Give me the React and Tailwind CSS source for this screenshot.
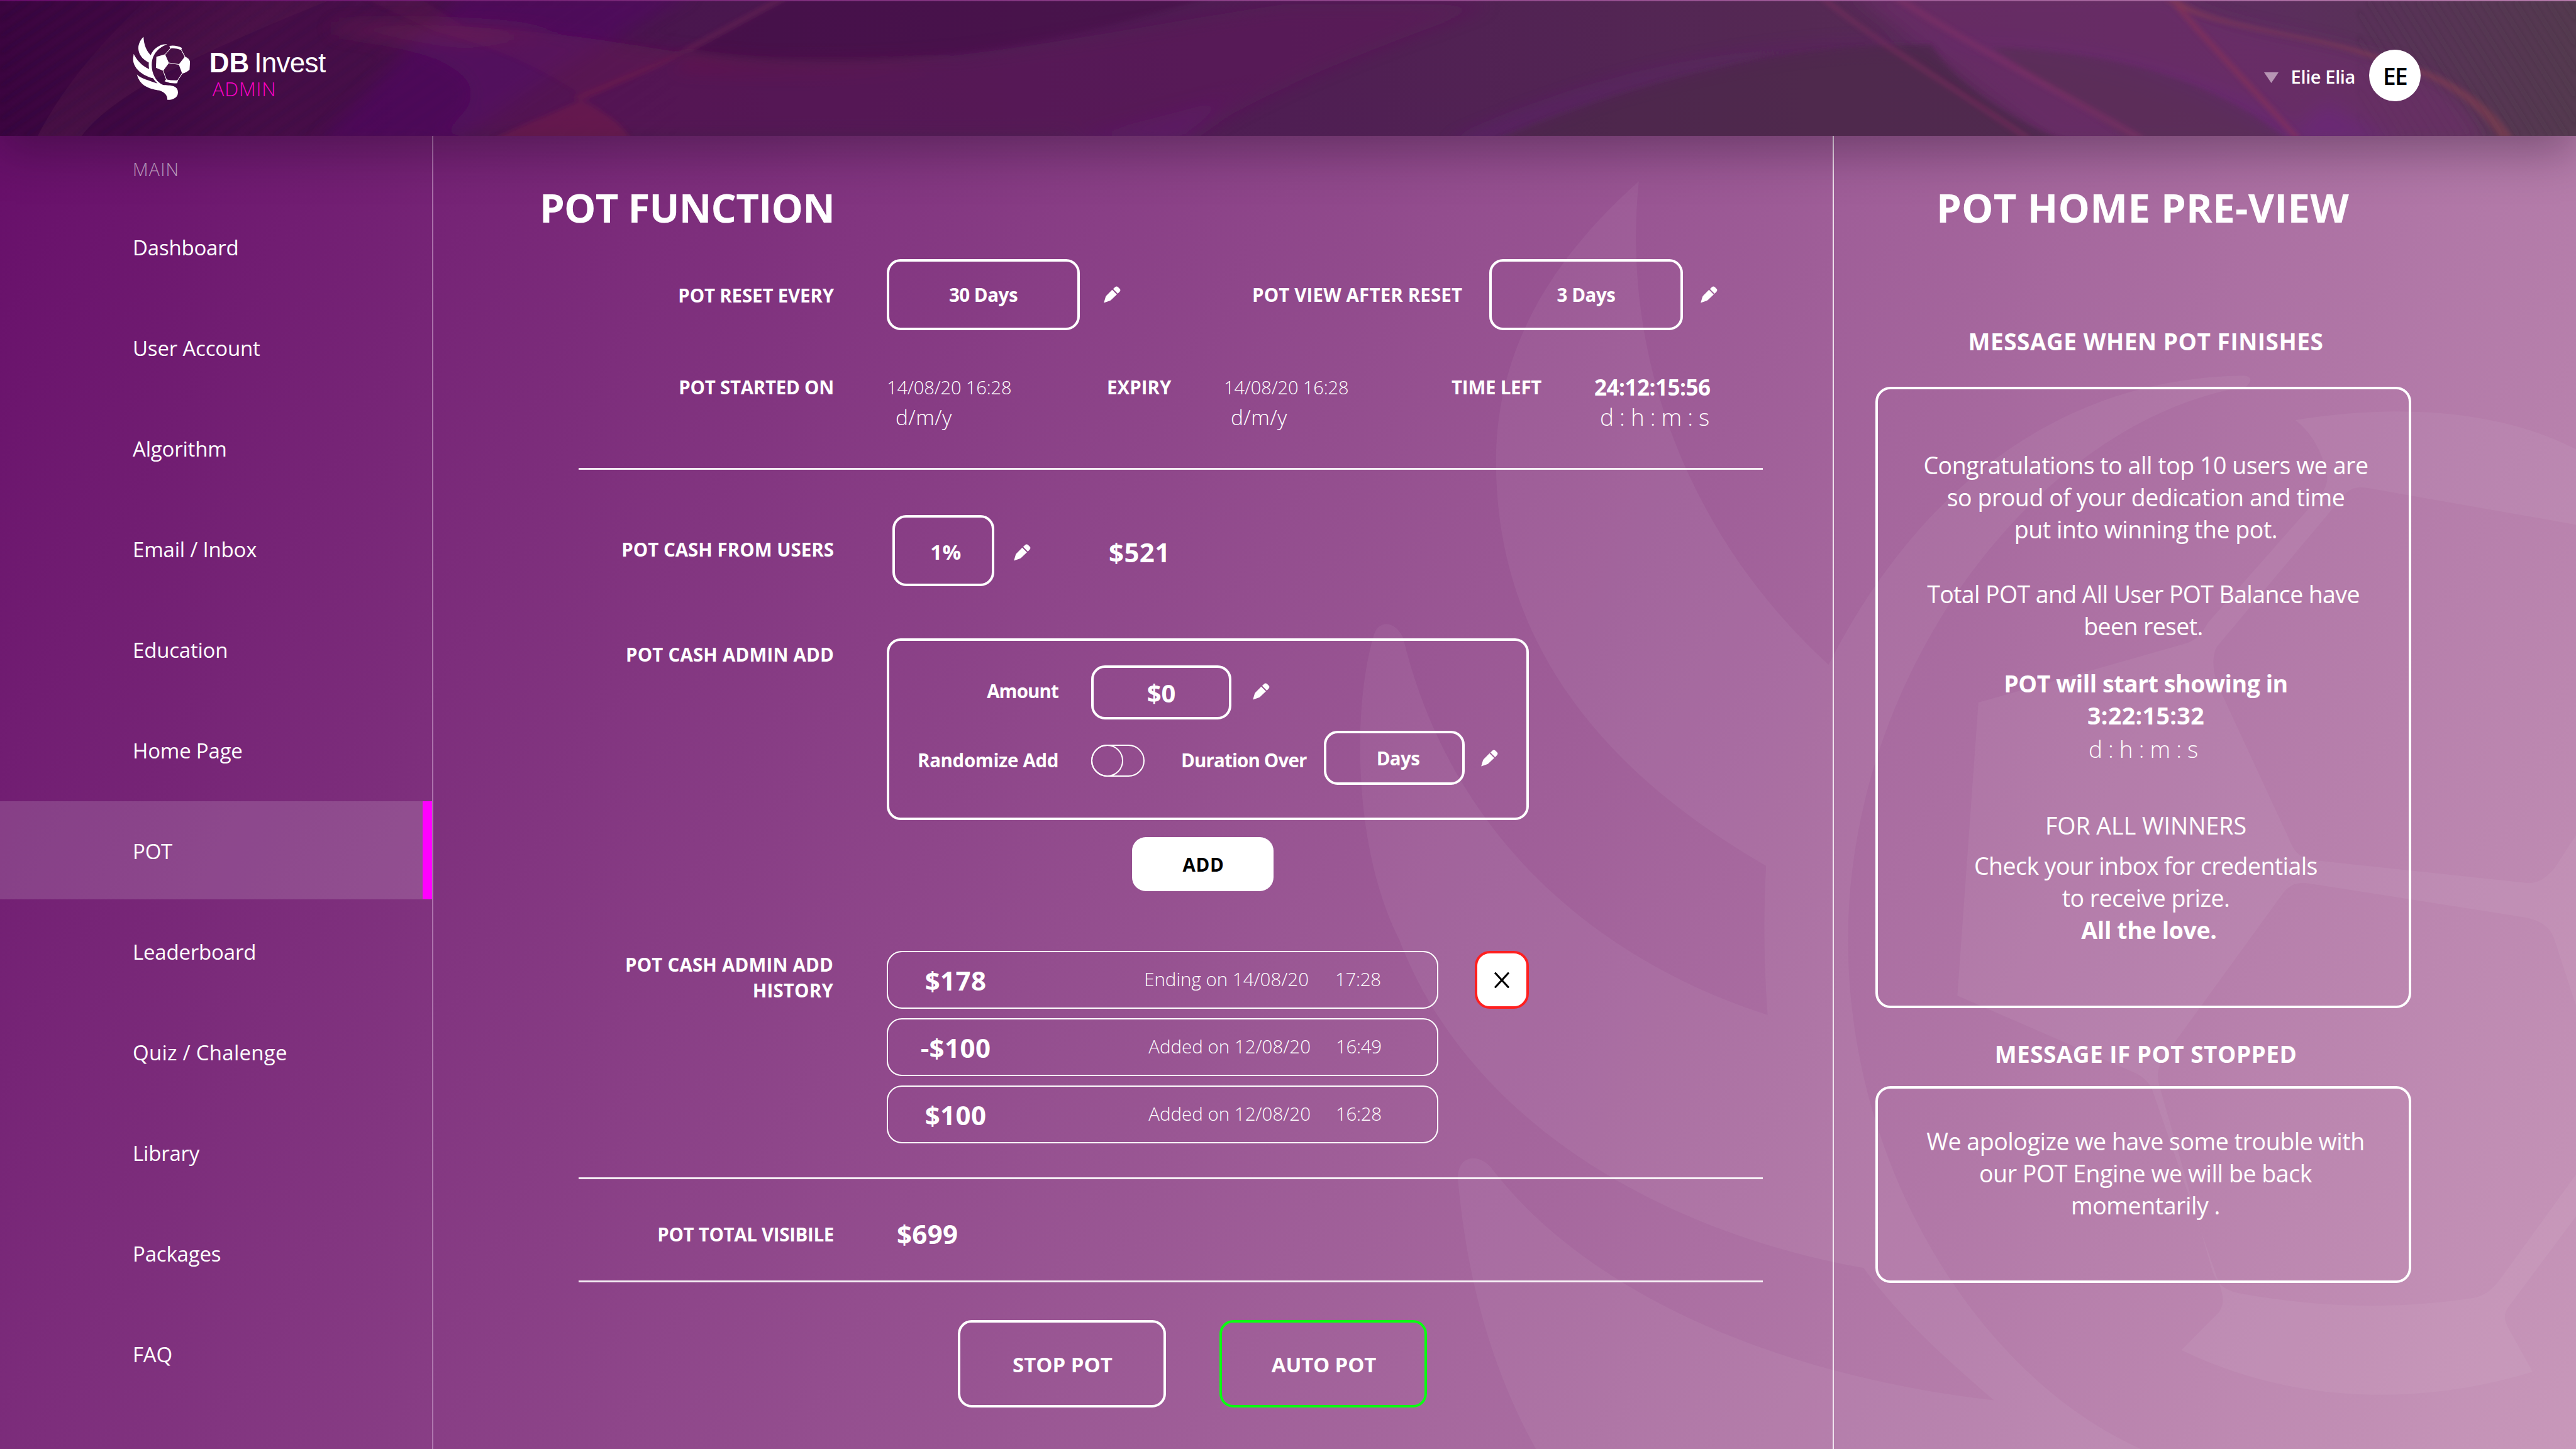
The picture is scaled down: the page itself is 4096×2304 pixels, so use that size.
import React from "react";

const NAV = [
  "Dashboard",
  "User Account",
  "Algorithm",
  "Email / Inbox",
  "Education",
  "Home Page",
  "POT",
  "Leaderboard",
  "Quiz / Chalenge",
  "Library",
  "Packages",
  "FAQ",
];

const HISTORY = [
  { amount: "$178", label: "Ending on 14/08/20", time: "17:28" },
  { amount: "-$100", label: "Added on 12/08/20", time: "16:49" },
  { amount: "$100", label: "Added on 12/08/20", time: "16:28" },
];

function Pencil({ className = "" }) {
  return (
    <svg viewBox="0 0 27 27" className={"h-[27px] w-[27px] shrink-0 fill-white " + className}>
      <path d="M0.2 26.6 L3 17 C3.3 16.1 3.7 15.5 4.3 14.9 L13.4 5.8 L20.9 13.2 L12.2 21.6 C11.2 22.6 10.2 23.2 8.9 23.6 Z" />
      <path d="M14.9 4.5 L18 1.4 C19.4 0.1 21.3 0.1 22.7 1.4 L25.5 4.3 C26.8 5.7 26.7 7.4 25.4 8.7 L22.3 11.9 Z" />
    </svg>
  );
}

function LogoMark() {
  return (
    <svg viewBox="95 70 370 410" className="h-[105px] w-[94.7px] shrink-0">
      <path
        fill="#fff"
        d="M170 80 C172 132 190 170 215 194 C230 155 270 123 318 126 C255 150 221 195 221 255 C221 320 260 372 299 380 C345 382 384 385 384 425 C384 460 350 472 318 471 C320 448 305 425 268 413 C220 405 148 392 129 313 C150 337 200 350 257 370 C243 357 236 347 229 337 C170 322 105 280 105 215 L109 186 C125 220 160 262 205 280 C202 265 202 252 203 240 C160 218 138 185 138 150 C138 120 155 95 170 80 Z"
      />
      <g fill="#fff">
        <path d="M250 204 L304 188 L328 243 L292 291 L247 272 Z" />
        <path d="M427 203 C445 210 455 220 459 234 L456 284 C445 296 430 304 410 308 L389 252 Z" />
        <path d="M331 136 Q372 130 409 149 L404 162 Q370 147 335 152 Z" />
        <path d="M310 344 Q345 352 384 350 L380 368 Q338 372 301 356 Z" />
      </g>
      <path
        fill="none"
        stroke="#fff"
        strokeWidth="4"
        d="M304 190 L338 151 M404 160 L428 205 M327 242 L391 252 M291 288 L313 348 M411 305 L381 352"
      />
    </svg>
  );
}

function Watermark() {
  return (
    <svg viewBox="0 0 4096 2304" className="absolute inset-0 h-full w-full">
      <g transform="translate(2150.4 215) scale(1.2411 1.3322)" fill="#fff" fillOpacity="0.05">
        <path d="M367 55 C240 160 184 270 184 390 C184 620 340 770 530 872 C526 940 528 1000 532 1050 C330 990 130 850 65 600 C55 580 35 578 28 595 C0 680 0 850 60 960 C150 1180 400 1310 655 1352 C700 1410 760 1460 822 1510 C540 1480 300 1380 180 1235 C165 1215 135 1215 135 1245 C150 1400 195 1500 235 1568 L1010 1568 C800 1480 635 1230 635 960 C635 640 880 340 1145 300 C1155 292 1150 287 1140 287 C900 290 720 430 610 632 C420 470 345 250 367 55 Z" />
        <path d="M1208 340 C1340 320 1470 328 1568 375 L1568 465 L1300 421 C1285 419 1278 422 1270 430 L1108 610 C1100 622 1103 640 1108 655 L1200 840 C1205 852 1212 862 1228 865 L1500 892 C1520 895 1530 885 1540 875 L1568 835 L1568 1040 L1540 960 C1535 945 1522 938 1505 934 L1225 893 C1210 891 1200 895 1192 905 L1040 1100 C1032 1112 1030 1122 1034 1135 L1100 1350 C1105 1368 1115 1378 1135 1382 C1250 1402 1350 1400 1435 1388 C1450 1386 1460 1378 1470 1366 L1568 1240 L1568 1290 L1480 1400 C1475 1408 1476 1414 1480 1422 L1512 1476 C1350 1522 1190 1508 1062 1450 L1110 1405 C1117 1395 1116 1388 1112 1375 L1025 1140 C1020 1128 1010 1122 1000 1118 L775 1027 L802 677 L1070 606 C1085 600 1090 592 1096 582 L1240 430 C1252 415 1250 405 1245 392 C1238 370 1225 352 1208 340 Z" />
      </g>
    </svg>
  );
}

function HeaderArt() {
  return (
    <svg viewBox="0 0 4096 216" preserveAspectRatio="none" className="absolute inset-0 h-full w-full">
      <defs>
        <linearGradient id="hb" x1="0" x2="1" y1="0" y2="0">
          <stop offset="0" stopColor="#3c0541" />
          <stop offset="0.1" stopColor="#470d48" />
          <stop offset="0.3" stopColor="#4a184f" />
          <stop offset="0.5" stopColor="#4f1e53" />
          <stop offset="0.7" stopColor="#552954" />
          <stop offset="0.88" stopColor="#5b2d5d" />
          <stop offset="1" stopColor="#553a50" />
        </linearGradient>
        <linearGradient id="lf" x1="0" x2="0.6" y1="0" y2="1">
          <stop offset="0" stopColor="#7a3050" stopOpacity="0" />
          <stop offset="1" stopColor="#603050" stopOpacity="0.3" />
        </linearGradient>
        <pattern id="hatch" width="22" height="22" patternUnits="userSpaceOnUse" patternTransform="rotate(56)">
          <rect width="7" height="22" fill="#1c0322" fillOpacity="0.16" />
        </pattern>
        <pattern id="hatchR" width="22" height="22" patternUnits="userSpaceOnUse" patternTransform="rotate(-32)">
          <rect width="7" height="22" fill="#3a2a3c" fillOpacity="0.14" />
        </pattern>
        <linearGradient id="fadeL" x1="0" x2="1" y1="0" y2="0">
          <stop offset="0" stopColor="#fff" />
          <stop offset="1" stopColor="#000" />
        </linearGradient>
        <mask id="mL">
          <rect width="1100" height="216" fill="url(#fadeL)" />
        </mask>
        <filter id="b3" x="-5%" y="-20%" width="110%" height="140%">
          <feGaussianBlur stdDeviation="4" />
        </filter>
        <filter id="b8" x="-5%" y="-20%" width="110%" height="140%">
          <feGaussianBlur stdDeviation="14" />
        </filter>
      </defs>
      <rect width="4096" height="216" fill="url(#hb)" />
      <rect width="1100" height="216" fill="url(#hatch)" mask="url(#mL)" filter="url(#b3)" />
      <rect x="3750" width="346" height="216" fill="url(#hatchR)" filter="url(#b3)" />
      <path d="M60 216 C110 120 170 60 230 0 L520 0 C300 90 180 150 130 216 Z" fill="url(#lf)" />
      <g filter="url(#b8)" opacity="0.85">
        <g transform="translate(384 0) scale(2.3676 0.256)">
          <path d="M60 180 C130 100 220 200 300 330 C350 410 420 390 480 340 C560 250 620 130 700 20 L840 20 C760 300 700 500 640 843 L130 843 C190 500 130 300 60 180 Z" fill="#641a5c" fillOpacity="0.5" />
          <path d="M150 -60 L305 -60 L215 420 L140 900 L50 900 Z" fill="#560e70" fillOpacity="0.45" />
          <path d="M60 150 C100 130 170 150 210 200 L150 260 C120 230 90 200 60 190 Z" fill="#7c2a50" fillOpacity="0.45" />
          <path d="M300 330 C350 410 420 390 480 360 C420 470 330 440 290 420 Z" fill="#6f1a4c" fillOpacity="0.6" />
          <path d="M700 520 L660 640 L630 900 L545 900 Z" fill="#611c6c" fillOpacity="0.7" />
          <path d="M1080 -60 L1298 -60 C1310 150 1395 220 1425 330 C1475 430 1495 620 1510 900 L1215 900 Z" fill="#742c70" fillOpacity="0.6" />
          <path d="M820 900 C900 560 1000 270 1120 265 C1250 260 1340 600 1385 900" fill="none" stroke="#6a1f84" strokeWidth="22" strokeOpacity="0.5" />
          <path d="M1385 760 L1400 640 L1450 900 L1385 900 Z" fill="#70208a" fillOpacity="0.5" />
        </g>
      </g>
      <g filter="url(#b3)" opacity="0.7">
        <g transform="translate(384 0) scale(2.3676 0.256)">
          <path d="M80 -30 L118 -30 L150 160 C220 190 260 280 300 320 L165 880 L262 880 C240 600 190 330 130 190 Z" fill="#7c2050" fillOpacity="0.2" />
          <path d="M298 310 C280 440 230 600 165 880 L262 880 C255 720 230 640 222 600 Z" fill="#7d1f48" fillOpacity="0.5" />
          <path d="M365 -30 L298 310" stroke="#7a2555" strokeWidth="6" strokeOpacity="0.6" />
          <path d="M370 -30 L650 -30 C560 250 470 370 400 375 C350 375 320 340 302 310 Z" fill="#3c1040" fillOpacity="0.4" />
          <path d="M840 880 C910 600 1010 290 1115 272 C1150 500 1180 700 1200 880 Z" fill="#4a2846" fillOpacity="0.7" />
          <path d="M1135 272 C1150 500 1180 700 1225 880 L1200 880 L1115 275 Z" fill="#462445" fillOpacity="0.8" />
          <path d="M1175 290 C1280 320 1340 600 1375 880 L1270 880 Z" fill="#523050" fillOpacity="0.7" />
          <path d="M1062 -20 C1100 270 1150 540 1200 860" fill="none" stroke="#85305f" strokeWidth="5" strokeOpacity="0.65" />
          <path d="M1112 -20 C1160 270 1220 560 1275 860" fill="none" stroke="#8a3068" strokeWidth="8" strokeOpacity="0.6" />
          <path d="M1296 -20 C1312 150 1395 215 1430 340 C1475 440 1505 620 1521 860" fill="none" stroke="#944450" strokeWidth="9" strokeOpacity="0.65" />
          <path d="M1300 30 C1325 300 1350 560 1381 860" fill="none" stroke="#a0384f" strokeWidth="4" strokeOpacity="0.65" />
        </g>
      </g>
    </svg>
  );
}

function Header() {
  return (
    <header className="relative mt-[2px] flex h-[214px] shrink-0 items-start overflow-hidden">
      <HeaderArt />
      <div className="relative flex pt-[54px] pl-[209px]">
        <LogoMark />
        <div className="flex flex-col pl-[29px]">
          <div className="mt-[19px] flex h-[50px] items-center font-['Liberation_Sans',sans-serif] text-[44px] leading-[50px]">
            <span className="font-bold">DB</span>
            <span className="ml-[8px] tracking-[-0.016em]">Invest</span>
          </div>
          <div className="ml-[5px] text-[31px] leading-[32px] font-light tracking-[0.028em] text-[#ff00c8]">ADMIN</div>
        </div>
      </div>
      <div className="relative mr-[247px] ml-auto flex items-center pt-[77px]">
        <svg viewBox="0 0 23 17" className="mt-[7px] h-[17px] w-[23px] fill-[#b795b4]">
          <path d="M0 0 H23 L11.5 17 Z" />
        </svg>
        <span className="mr-[22px] ml-[20px] pt-[3px] text-[29px] leading-[40px] font-semibold tracking-[-0.013em]">Elie Elia</span>
        <div className="flex h-[82px] w-[82px] items-center justify-center rounded-full bg-white pt-[2px] text-[37px] font-semibold tracking-[-0.045em] text-black">
          EE
        </div>
      </div>
    </header>
  );
}

function Sidebar() {
  return (
    <nav className="flex w-[689px] shrink-0 flex-col border-r-2 border-[#c08fc0]/70">
      <div className="mt-[33px] pl-[211px] text-[28.5px] leading-[40px] font-light tracking-[0.043em] text-white/60">MAIN</div>
      <ul className="mt-[25px] flex flex-col gap-[4px] text-[33px] tracking-[-0.006em]">
        {NAV.map((item) => (
          <li
            key={item}
            className={
              item === "POT"
                ? "flex h-[156px] items-center border-r-[15px] border-[#ff00ff] bg-white/15 pt-[4px] pl-[211px]"
                : item === "Quiz / Chalenge"
                  ? "flex h-[156px] items-center pt-[4px] pl-[211px] tracking-[0.008em]"
                  : "flex h-[156px] items-center pt-[4px] pl-[211px]"
            }
          >
            {item}
          </li>
        ))}
      </ul>
    </nav>
  );
}

function Label({ children, className = "" }) {
  return (
    <div className={"w-[637px] shrink-0 text-right text-[29.5px] leading-[41px] font-bold whitespace-nowrap " + className}>
      {children}
    </div>
  );
}

function Divider({ className }) {
  return <div className={"ml-[231px] h-[3px] w-[1883px] shrink-0 bg-white/90 " + className} />;
}

const fieldBase = "flex shrink-0 items-center justify-center rounded-[22px] border-4 border-white font-bold ";

function PotFunction() {
  return (
    <main className="flex w-[2225px] shrink-0 flex-col whitespace-nowrap">
      <h1 className="mt-[71px] h-[86px] pl-[169px] text-[63.5px] leading-[86px] font-bold tracking-[-0.0125em]">POT FUNCTION</h1>

      <div className="mt-[39px] flex h-[113px] items-center">
        <Label className="pt-[2px] tracking-[-0.006em]">POT RESET EVERY</Label>
        <div className={fieldBase + "ml-[84px] h-[113px] w-[307px] pt-[2px] text-[29.5px] tracking-[-0.016em]"}>30 Days</div>
        <Pencil className="ml-[38px]" />
        <div className="ml-[209px] w-[336px] pt-[2px] text-[29.5px] font-bold tracking-[0.0046em]">POT VIEW AFTER RESET</div>
        <div className={fieldBase + "ml-[41px] h-[113px] w-[308px] pt-[2px] text-[29.5px] tracking-[-0.016em]"}>3 Days</div>
        <Pencil className="ml-[28px]" />
      </div>

      <div className="mt-[67px] flex h-[94px] items-start text-[29px] leading-[48px]">
        <Label className="leading-[48px] tracking-[-0.009em]">POT STARTED ON</Label>
        <div className="ml-[84px] w-[350px]">
          <div className="font-light tracking-[-0.0032em]">14/08/20 16:28</div>
          <div className="ml-[14px] text-[33.5px] leading-[46px] font-light tracking-[0.012em]">d/m/y</div>
        </div>
        <div className="w-[186px] text-[29.5px] font-bold">EXPIRY</div>
        <div className="w-[362px]">
          <div className="font-light tracking-[-0.0032em]">14/08/20 16:28</div>
          <div className="ml-[11px] text-[33.5px] leading-[46px] font-light tracking-[0.012em]">d/m/y</div>
        </div>
        <div className="w-[227px] text-[29.5px] font-bold tracking-[-0.008em]">TIME LEFT</div>
        <div>
          <div className="text-[35px] font-bold tracking-[-0.0144em]">24:12:15:56</div>
          <div className="ml-[9px] text-[37px] leading-[46px] font-light tracking-[-0.008em]">d : h : m : s</div>
        </div>
      </div>

      <Divider className="mt-[58px]" />

      <div className="mt-[72px] flex h-[113px] items-center">
        <Label className="pb-[5px]">POT CASH FROM USERS</Label>
        <div className={fieldBase + "ml-[93px] h-[113px] w-[162px] pt-[4px] pl-[8px] text-[33px] tracking-[0.01em]"}>1%</div>
        <Pencil className="mt-[6px] ml-[31px]" />
        <div className="ml-[124px] pt-[4px] text-[42px] font-bold tracking-[0.01em]">$521</div>
      </div>

      <div className="mt-[83px] flex h-[289px] items-start">
        <Label className="pt-[5px] tracking-[0.006em]">POT CASH ADMIN ADD</Label>
        <div className="ml-[84px] flex h-[289px] w-[1021px] flex-col rounded-[22px] border-4 border-white pt-[39px] text-[29.5px] font-bold">
          <div className="flex h-[86px] items-center">
            <div className="w-[269px] pb-[4px] text-right tracking-[-0.03em]">Amount</div>
            <div className={fieldBase + "ml-[52px] h-[86px] w-[223px] pt-px text-[40px]"}>$0</div>
            <Pencil className="mb-[3px] ml-[34px]" />
          </div>
          <div className="mt-[18px] flex h-[86px] items-center">
            <div className="w-[269px] pt-[9px] text-right tracking-[-0.0125em]">Randomize Add</div>
            <div className="mt-[8px] ml-[52px] flex h-[51px] w-[85px] rounded-full border-2 border-white">
              <div className="-mt-[2px] -ml-[2px] h-[51px] w-[51px] rounded-full border-2 border-white" />
            </div>
            <div className="ml-[58px] w-[200px] pt-[9px] tracking-[-0.029em]">Duration Over</div>
            <div className={fieldBase + "ml-[27px] h-[86px] w-[224px] pt-[2px] pl-[12px] tracking-[-0.02em]"}>Days</div>
            <Pencil className="ml-[26px]" />
          </div>
        </div>
      </div>

      <button className="mt-[27px] ml-[1111px] h-[86px] w-[225px] rounded-[22px] bg-white pt-[3px] pl-[2px] text-[29.5px] font-bold tracking-[0.024em] text-black">
        ADD
      </button>

      <div className="mt-[95px] flex h-[306px] items-start">
        <Label className="pt-[1px] pr-px tracking-[0.006em]">
          POT CASH ADMIN ADD
          <br />
          HISTORY
        </Label>
        <div className="ml-[84px] flex w-[877px] flex-col gap-[15px]">
          {HISTORY.map((h) => (
            <div key={h.amount} className="flex h-[92px] items-center rounded-[24px] border-2 border-white text-[29.5px]">
              <div className="w-[215px] text-center text-[42px] font-bold tracking-[0.01em]">{h.amount}</div>
              <div className={h.label.startsWith("Added") ? "mr-[40px] ml-auto pb-px font-light" : "mr-[42px] ml-auto pb-px font-light"}>{h.label}</div>
              <div className={h.label.startsWith("Added") ? "w-[161px] pb-px font-light tracking-[-0.012em]" : "w-[162px] pb-px font-light tracking-[-0.012em]"}>{h.time}</div>
            </div>
          ))}
        </div>
        <button className="ml-[58px] flex h-[92px] w-[86px] items-center justify-center rounded-[24px] border-4 border-[#ff1f1f] bg-white">
          <svg viewBox="0 0 24 24" className="h-[25px] w-[24px]">
            <path d="M1 0 L23 24 M23 0 L1 24" stroke="#000" strokeWidth="3" fill="none" />
          </svg>
        </button>
      </div>

      <Divider className="mt-[54px]" />
      <div className="flex h-[161px] items-center pt-[11px]">
        <Label className="pt-[2px] tracking-[-0.0115em]">POT TOTAL VISIBILE</Label>
        <div className="ml-[100px] text-[42px] font-bold tracking-[0.008em]">$699</div>
      </div>
      <Divider className="" />

      <div className="mt-[60px] flex gap-[85px] pl-[834px] text-[33px]">
        <button className={fieldBase + "h-[139px] w-[331px] pt-[3px] pl-[2px]"}>STOP POT</button>
        <button className="flex h-[139px] w-[330px] shrink-0 items-center justify-center rounded-[22px] border-4 border-[#0aff12] pt-[3px] pl-[2px] font-bold tracking-[-0.005em]">
          AUTO POT
        </button>
      </div>
    </main>
  );
}

function Preview() {
  return (
    <aside className="flex flex-1 flex-col border-l-2 border-white/80 whitespace-nowrap">
      <h2 className="mt-[71px] ml-[65px] h-[86px] w-[852px] text-center text-[63.5px] leading-[86px] font-bold tracking-[0.004em]">
        POT HOME PRE-VIEW
      </h2>
      <h3 className="mt-[144px] ml-[66px] w-[860px] text-center text-[37px] leading-[52px] font-bold tracking-[0.014em]">
        MESSAGE WHEN POT FINISHES
      </h3>
      <div className="mt-[46px] ml-[66px] h-[988px] w-[852px] shrink-0 rounded-[24px] border-4 border-white pt-[95px] text-center text-[37.5px] leading-[51.2px]">
        <p className="pl-[8px] tracking-[-0.0125em]">
          Congratulations to all top 10 users we are
          <br />
          so proud of your dedication and time
          <br />
          put into winning the pot.
        </p>
        <p className="mt-[51px] tracking-[-0.0165em]">
          Total POT and All User POT Balance have
          <br />
          been reset.
        </p>
        <p className="mt-[40px] pl-[8px] font-bold tracking-[-0.0125em]">
          POT will start showing in
          <br />
          <span className="tracking-[0.01em]">3:22:15:32</span>
        </p>
        <p className="mt-[2px] text-[37px] font-light tracking-[-0.008em]">d : h : m : s</p>
        <p className="mt-[70px] pl-[8px]">FOR ALL WINNERS</p>
        <p className="mt-[13px] pl-[8px] tracking-[-0.0155em]">
          Check your inbox for credentials
          <br />
          to receive prize.
        </p>
        <p className="pl-[18px] font-bold tracking-[-0.01em]">All the love.</p>
      </div>
      <h3 className="mt-[47px] ml-[66px] w-[860px] text-center text-[37px] leading-[52px] font-bold tracking-[0.012em]">
        MESSAGE IF POT STOPPED
      </h3>
      <p className="mt-[25px] ml-[66px] h-[313px] w-[852px] shrink-0 rounded-[24px] border-4 border-white pt-[58px] pl-[7px] text-center text-[37.5px] leading-[51.2px] tracking-[-0.012em]">
        We apologize we have some trouble with
        <br />
        our POT Engine we will be back
        <br />
        momentarily .
      </p>
    </aside>
  );
}

export default function App() {
  return (
    <div className="relative flex h-[2304px] w-[4096px] flex-col overflow-hidden bg-[linear-gradient(118deg,#650c68_0%,#c898ba_100%)] font-['Open_Sans','Noto_Sans',sans-serif] text-white">
      <Watermark />
      <div className="relative z-10 shadow-[0_24px_70px_0_rgba(20,5,25,0.34)]">
        <Header />
      </div>
      <div className="relative flex min-h-0 flex-1">
        <Sidebar />
        <PotFunction />
        <Preview />
      </div>
    </div>
  );
}
